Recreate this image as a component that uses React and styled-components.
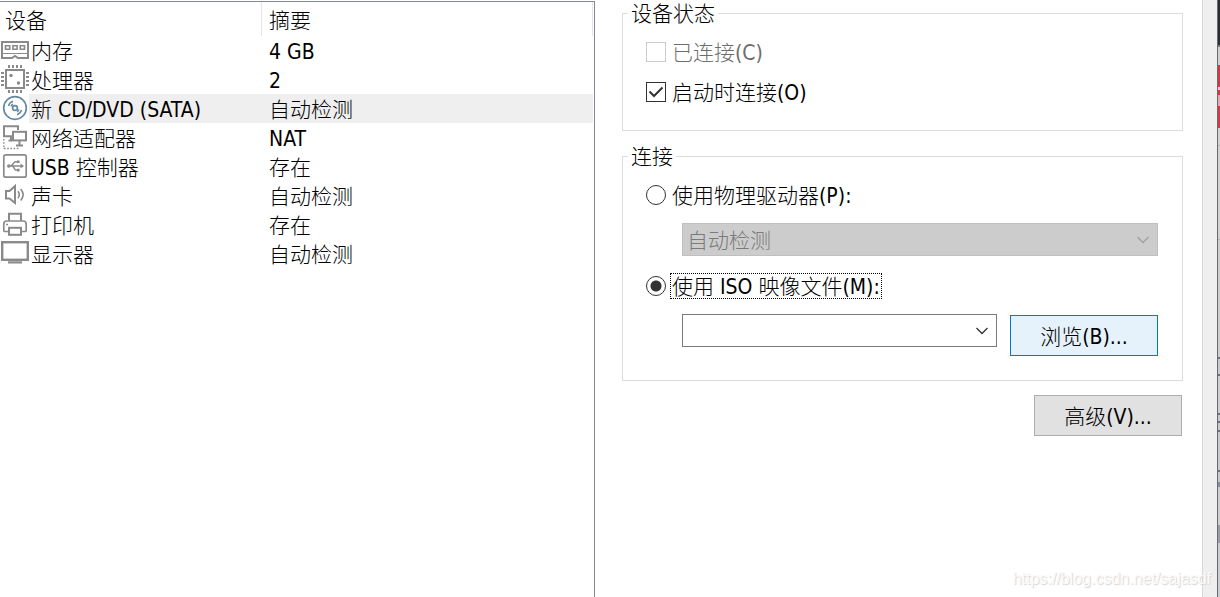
import { useState } from "react";
import styled, { createGlobalStyle } from "styled-components";

const MemoryIcon = () => (
  <Icon viewBox="0 0 30 28">
    <path d="M2 6H28V22H18L15 20L12 22H2Z" />
    <path d="M2 17.5H28" strokeWidth="1" />
    <path d="M5.5 9.8h4.2v3.4h-4.2zM12.9 9.8h4.2v3.4h-4.2zM20.3 9.8h4.2v3.4h-4.2z" strokeWidth="1.6" />
  </Icon>
);

const CpuIcon = () => (
  <Icon viewBox="0 0 30 28">
    <rect x="6" y="5" width="18" height="18" />
    <path d="M8 1.5H22M8 26.5H22" strokeWidth="3" strokeDasharray="2" />
    <path d="M2.5 7V21M27.5 7V21" strokeWidth="3" strokeDasharray="2" />
    <circle cx="11" cy="10.5" r="1.7" fill="#8a8a8a" stroke="none" />
    <circle cx="18.5" cy="18" r="1.7" fill="#8a8a8a" stroke="none" />
  </Icon>
);

const DiscIcon = () => (
  <Icon viewBox="0 0 30 28" $color="#6688a5">
    <circle cx="15" cy="14" r="11.3" strokeWidth="1.7" />
    <circle cx="15" cy="14" r="2.4" strokeWidth="1.7" />
    <path d="M8.4 12A7.5 7.5 0 0 1 13 7.3M11 12.5A4 4 0 0 1 13 10.2" strokeWidth="1.5" />
    <path d="M21.6 16A7.5 7.5 0 0 1 17 20.7M19 15.5A4 4 0 0 1 17 17.8" strokeWidth="1.5" />
  </Icon>
);

const NetworkIcon = () => (
  <Icon viewBox="0 0 30 28">
    <path d="M12 13.2H4V3.2H18V7" />
    <path d="M11 13V17.5H8.5" />
    <rect x="13" y="8.8" width="13" height="8.6" />
    <path d="M19.5 18V22M16 22.5H23" />
    <path d="M3.8 16V26M4 25.5H19" strokeWidth="1.4" strokeDasharray="1.6 1.6" />
  </Icon>
);

const UsbIcon = () => (
  <Icon viewBox="0 0 30 28">
    <rect x="3.8" y="2.8" width="22.4" height="22.4" rx="2" strokeWidth="1.7" />
    <path d="M8 14H22M11 14L15 9.8H18M12.5 14L15.5 18H18" strokeWidth="1.4" />
    <path d="M20.5 11.5L24 14L20.5 16.5Z" fill="#8a8a8a" stroke="none" />
    <circle cx="8.8" cy="14" r="1.8" fill="#8a8a8a" stroke="none" />
    <path d="M17 8.5h2.6v2.6h-2.6zM17 16.8h2.6v2.6h-2.6z" fill="#8a8a8a" stroke="none" />
  </Icon>
);

const SoundIcon = () => (
  <Icon viewBox="0 0 30 28">
    <path d="M6 10H9.5L15 5V22L9.5 17.5H6Z" />
    <path d="M18 10.3Q20.5 13.7 18 17.2M20.7 8Q25.5 13.7 20.7 19.5" strokeWidth="1.6" />
  </Icon>
);

const PrinterIcon = () => (
  <Icon viewBox="0 0 30 28">
    <path d="M9 11V3.8H21V11" />
    <path d="M9 21.5H4.8Q3.8 21.5 3.8 20.5V14Q3.8 11 7 11H23Q26.2 11 26.2 14V20.5Q26.2 21.5 25.2 21.5H21" strokeWidth="1.7" />
    <rect x="9" y="17.8" width="12" height="7" />
    <path d="M6 14.5H8" strokeWidth="1.4" />
  </Icon>
);

const DisplayIcon = () => (
  <Icon viewBox="0 0 30 28">
    <rect x="2.2" y="3.2" width="25.6" height="17.6" strokeWidth="2.4" />
    <path d="M8 23.4H22" strokeWidth="2.2" />
  </Icon>
);

const devices = [
  { name: "内存", summary: "4 GB", icon: MemoryIcon },
  { name: "处理器", summary: "2", icon: CpuIcon },
  { name: "新 CD/DVD (SATA)", summary: "自动检测", icon: DiscIcon },
  { name: "网络适配器", summary: "NAT", icon: NetworkIcon },
  { name: "USB 控制器", summary: "存在", icon: UsbIcon },
  { name: "声卡", summary: "自动检测", icon: SoundIcon },
  { name: "打印机", summary: "存在", icon: PrinterIcon },
  { name: "显示器", summary: "自动检测", icon: DisplayIcon },
];

// what shows of the window behind, top to bottom
const bands = [
  [45, "#2b2e30"],
  [2, "#77797a"],
  [18, "#d0d0d0"],
  [22, "#d83643"],
  [3, "#eccfd1"],
  [5, "#d83643"],
  [11, "#e3a9ae"],
  [22, "#d83643"],
  [17, "#d2d2d2"],
  [1, "#b5b5b5"],
  [93, "#d2d2d2"],
  [1, "#b5b5b5"],
  [117, "#cdcdcd"],
  [2, "#6c7087"],
  [15, "#c6c9ce"],
  [2, "#6c7087"],
  [37, "#cfcfd1"],
  [2, "#6c7087"],
  [6, "#c6c9ce"],
  [2, "#6c7087"],
  [7, "#c6c9ce"],
  [2, "#6c7087"],
  [38, "#c9cacd"],
  [2, "#6c7087"],
  [10, "#c6c9ce"],
  [5, "#8b8ea0"],
  [38, "#cfcfd1"],
  [18, "#9a9dab"],
  [35, "#cbccd0"],
];

const Chevron = () => (
  <Arrow viewBox="0 0 12 8" aria-hidden="true">
    <path d="M0.5 1L6 6.5L11.5 1" />
  </Arrow>
);

const App = () => {
  const [selected, setSelected] = useState(2);
  const [connectAtStart, setConnectAtStart] = useState(true);
  const [source, setSource] = useState("iso");

  return (
    <Page lang="zh-CN">
      <GlobalStyle />
      <DevicePanel>
        <DeviceTable>
          <colgroup>
            <col width="29" />
            <col width="233" />
            <col />
          </colgroup>
          <thead>
            <tr>
              <HeadCell colSpan={2}>设备</HeadCell>
              <HeadCell>摘要</HeadCell>
            </tr>
          </thead>
          <tbody>
            {devices.map(({ name, summary, icon: DeviceIcon }, index) => (
              <DeviceRow key={name} $selected={index === selected} onClick={() => setSelected(index)}>
                <IconCell>
                  <DeviceIcon />
                </IconCell>
                <NameCell>{name}</NameCell>
                <SummaryCell>{summary}</SummaryCell>
              </DeviceRow>
            ))}
          </tbody>
        </DeviceTable>
      </DevicePanel>

      <Settings>
        <Group>
          <legend>设备状态</legend>
          <Option>
            <Box>
              <CheckInput id="connected" type="checkbox" disabled />
            </Box>
            <OptionLabel htmlFor="connected" $disabled>
              已连接(C)
            </OptionLabel>
          </Option>
          <Option>
            <Box>
              <CheckInput
                id="connect-start"
                type="checkbox"
                checked={connectAtStart}
                onChange={(e) => setConnectAtStart(e.target.checked)}
              />
              {connectAtStart && (
                <Tick viewBox="0 0 20 20" aria-hidden="true">
                  <path d="M3.5 9.5L8 14L16.5 5.5" />
                </Tick>
              )}
            </Box>
            <OptionLabel htmlFor="connect-start">启动时连接(O)</OptionLabel>
          </Option>
        </Group>

        <Group>
          <legend>连接</legend>
          <Option>
            <RadioInput
              id="physical"
              type="radio"
              name="source"
              checked={source === "physical"}
              onChange={() => setSource("physical")}
            />
            <OptionLabel htmlFor="physical">使用物理驱动器(P):</OptionLabel>
          </Option>
          <Fields>
            <Dropdown>
              <Select aria-label="使用物理驱动器" disabled={source !== "physical"}>
                <option>自动检测</option>
              </Select>
              <Chevron />
            </Dropdown>
          </Fields>
          <Option>
            <RadioInput
              id="iso"
              type="radio"
              name="source"
              checked={source === "iso"}
              onChange={() => setSource("iso")}
            />
            <OptionLabel htmlFor="iso" $focused={source === "iso"}>
              使用 ISO 映像文件(M):
            </OptionLabel>
          </Option>
          <Fields>
            <Dropdown>
              <Select aria-label="使用 ISO 映像文件" disabled={source !== "iso"}>
                <option></option>
              </Select>
              <Chevron />
            </Dropdown>
            <Button type="button" $active>
              浏览(B)...
            </Button>
          </Fields>
        </Group>

        <Actions>
          <Button type="button">高级(V)...</Button>
        </Actions>
      </Settings>

      <WindowEdge />
      <Behind>
        {bands.map(([size, color], index) => (
          <Band key={index} $size={size} $color={color} />
        ))}
      </Behind>
      <Watermark>https://blog.csdn.net/sajasdf</Watermark>
    </Page>
  );
};

const GlobalStyle = createGlobalStyle`
  * {
    box-sizing: border-box;
  }
  body {
    margin: 0;
    background: #fff;
    color: #000;
  }
  body, button, select {
    font-family: "DejaVu Sans Condensed", "Noto Sans CJK SC", sans-serif;
    font-size: 21px;
    font-weight: 300;
    line-height: 26px;
  }
`;

const Page = styled.div`
  position: relative;
  display: flex;
  min-height: 100vh;
  overflow: hidden;
`;

const DevicePanel = styled.section`
  flex: 0 0 595px;
  margin-top: 1px;
  padding-right: 1px;
  border-top: 1px solid #828790;
  border-right: 1px solid #828790;
`;

const DeviceTable = styled.table`
  width: 100%;
  table-layout: fixed;
  border-collapse: separate;
  border-spacing: 0;
  td, th {
    padding: 0;
    text-align: left;
    font-weight: 300;
    white-space: nowrap;
  }
`;

const HeadCell = styled.th`
  && {
    height: 34px;
    padding: 3px 0 0 5px;
    border-right: 1px solid #e5e5e5;
  }
  && + & {
    padding-left: 7px;
  }
`;

const DeviceRow = styled.tr`
  height: 29px;
  cursor: default;
  td + td {
    padding-top: 2px;
    background: ${(props) => (props.$selected ? "#efefef" : "transparent")};
  }
`;

const IconCell = styled.td`
  line-height: 0;
  vertical-align: top;
`;

const NameCell = styled.td`
  && {
    padding-left: 2px;
  }
`;

const SummaryCell = styled.td`
  && {
    padding-left: 7px;
  }
`;

const Icon = styled.svg`
  display: block;
  width: 30px;
  height: 28px;
  fill: none;
  stroke: ${(props) => props.$color || "#8a8a8a"};
  stroke-width: 2;
`;

const Settings = styled.main`
  flex: 1;
  padding: 0 19px 0 27px;
`;

const Group = styled.fieldset`
  min-width: 0;
  margin: 0 0 12px;
  padding: 12px 23px 24px;
  border: 1px solid #dcdcdc;
  legend {
    margin-left: -18px;
    padding: 2px 3px 0;
    line-height: 24px;
  }
`;

const Option = styled.div`
  display: flex;
  align-items: center;
  height: 28px;
  & + & {
    margin-top: 12px;
  }
`;

const OptionLabel = styled.label`
  margin-left: 4px;
  padding: 2px 1px 0;
  line-height: 22px;
  color: ${(props) => (props.$disabled ? "#6d6d6d" : "#000")};
  border: 1px dotted ${(props) => (props.$focused ? "#000" : "transparent")};
`;

const Box = styled.span`
  display: grid;
`;

const CheckInput = styled.input`
  grid-area: 1 / 1;
  appearance: none;
  width: 20px;
  height: 20px;
  margin: 0;
  background: #fff;
  border: 1px solid #333;
  &:disabled {
    border-color: #ccc;
  }
`;

const Tick = styled.svg`
  grid-area: 1 / 1;
  width: 20px;
  height: 20px;
  fill: none;
  stroke: #333;
  stroke-width: 2;
  pointer-events: none;
`;

const RadioInput = styled.input`
  appearance: none;
  width: 20px;
  height: 20px;
  margin: 0;
  border: 1px solid #333;
  border-radius: 50%;
  background: #fff;
  &:checked {
    background: radial-gradient(circle, #333 5px, #fff 6px);
  }
`;

const Fields = styled.div`
  display: flex;
  gap: 13px;
  align-items: flex-start;
  margin: 14px 1px 0 36px;
  & + ${Option} {
    margin-top: 16px;
  }
`;

const Dropdown = styled.div`
  flex: 1;
  display: grid;
  align-items: center;
`;

const Select = styled.select`
  grid-area: 1 / 1;
  appearance: none;
  width: 100%;
  height: 33px;
  padding: 2px 28px 0 4px;
  color: #000;
  background: #fff;
  border: 1px solid #7a7a7a;
  border-radius: 0;
  &:disabled {
    color: #7a7a7a;
    background: #ccc;
    border-color: #bfbfbf;
    opacity: 1;
  }
`;

const Arrow = styled.svg`
  grid-area: 1 / 1;
  justify-self: end;
  width: 12px;
  height: 8px;
  margin-right: 9px;
  fill: none;
  stroke: #333;
  stroke-width: 1.3;
  pointer-events: none;
  ${Select}:disabled + & {
    stroke: #a0a0a0;
  }
`;

const Button = styled.button`
  width: 148px;
  height: 41px;
  margin-top: 1px;
  padding: 2px 0 0;
  color: #000;
  background: ${(props) => (props.$active ? "#e5f1fb" : "#e1e1e1")};
  border: 1px solid ${(props) => (props.$active ? "#0078d7" : "#adadad")};
`;

const Actions = styled.div`
  display: flex;
  justify-content: flex-end;
  padding: 1px 1px 0 0;
`;

const WindowEdge = styled.div`
  flex: 0 0 16px;
  background: #efefef;
  border-left: 1px solid #d8d8d8;
  border-right: 1px solid #6b6b6b;
`;

const Behind = styled.div`
  flex: 0 0 2px;
  display: flex;
  flex-direction: column;
  background: #cbccd0;
`;

const Band = styled.div`
  height: ${(props) => props.$size}px;
  background: ${(props) => props.$color};
`;

const Watermark = styled.span`
  position: absolute;
  right: 9px;
  bottom: 6px;
  font-family: "Liberation Sans", sans-serif;
  font-size: 16px;
  line-height: 24px;
  color: #fafafa;
  text-shadow: 1px 1px 1px #d4d4d4;
  pointer-events: none;
`;

export default App;
